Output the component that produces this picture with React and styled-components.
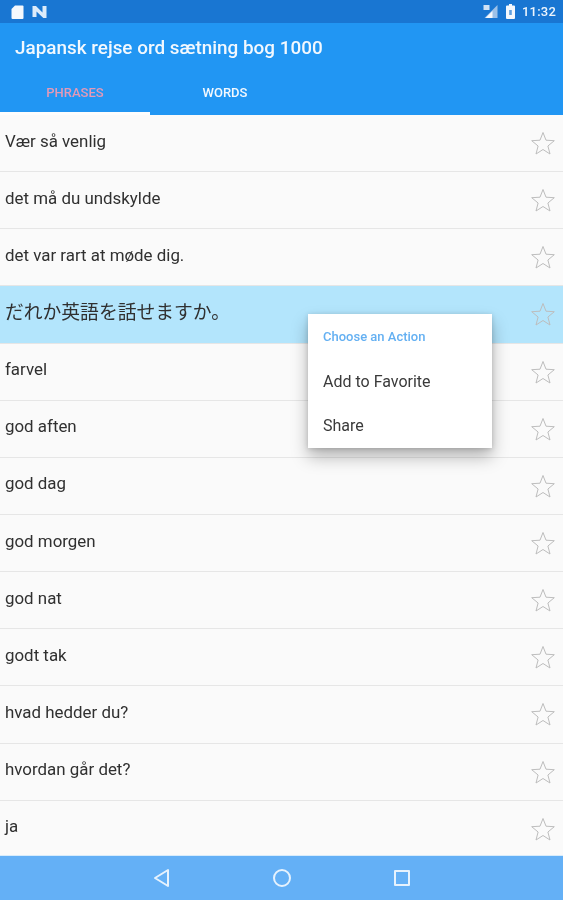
import React from "react";
import styled, { createGlobalStyle } from "styled-components";

const Global = createGlobalStyle`
  html, body { margin: 0; padding: 0; background: #fafafa; }
  #root { width: 563px; height: 900px; }
`;
const Page = styled.div`
  position: relative; width: 563px; height: 900px; overflow: hidden;
  display: flex; flex-direction: column; background: #fafafa;
  font-family: Roboto, "Noto Sans CJK JP", sans-serif; filter: blur(0.6px);
`;
const StatusBar = styled.div`
  height: 23px; flex: none; background: #1976d2; display: flex; align-items: center;
  padding: 0 7px 0 11px; color: #eef5fc;
`;
const StatusLeft = styled.div`display: flex; align-items: center; gap: 8px;`;
const StatusRight = styled.div`display: flex; align-items: center; margin-left: auto; gap: 7px;`;
const Clock = styled.span`font-size: 13px; font-weight: 500; letter-spacing: 0.2px;`;
const AppBar = styled.header`height: 92px; flex: none; background: #2196f3; display: flex; flex-direction: column;`;
const Title = styled.h1`
  margin: 0; padding: 14px 0 0 15px; height: 46px; box-sizing: border-box;
  font-size: 18.9px; line-height: 21px; font-weight: 500; color: #f2f8fe;
`;
const Tabs = styled.div`display: flex; height: 46px;`;
const Tab = styled.div`
  width: 150px; box-sizing: border-box; display: flex; align-items: center; justify-content: center;
  padding-top: 4px; font-size: 13px; font-weight: 500;
  color: ${p => (p.$active ? "#e39ab8" : "#f4f9fe")};
  border-bottom: 3px solid ${p => (p.$active ? "#fdfdfd" : "transparent")};
`;
const List = styled.main`flex: 1; min-height: 0; overflow: hidden;`;
const Row = styled.div`
  height: 57.15px; box-sizing: border-box; display: flex; align-items: center; justify-content: space-between;
  padding: 0 8px 0 5px; border-bottom: 1px solid #e6e6e6;
  background: ${p => (p.$selected ? "#b3e5fc" : "transparent")};
`;
const Label = styled.span`
  position: relative; top: ${p => (p.$large ? "-4px" : "-2.5px")}; color: #303030;
  font-size: ${p => (p.$large ? "18.8px" : "16.9px")};
`;
const Menu = styled.div`
  position: absolute; left: 308px; top: 314px; width: 184px; height: 134px; box-sizing: border-box;
  padding-left: 15px; background: #fff; color: #3a3a3a; font-size: 16px;
  box-shadow: 0 9px 16px rgba(0, 0, 0, 0.28), 0 1px 5px rgba(0, 0, 0, 0.16);
  display: flex; flex-direction: column;
`;
const MenuHeading = styled.div`height: 45px; box-sizing: border-box; display: flex; align-items: center; color: #64b0f2; font-size: 13px; font-weight: 500;`;
const MenuItem = styled.div`height: 45px; display: flex; align-items: center;`;
const NavBar = styled.nav`
  height: 45px; flex: none; background: #64b0f6; border-top: 1px solid #d8ecfb; box-sizing: border-box;
  display: grid; grid-template-columns: repeat(3, 120px); justify-content: center; justify-items: center; align-items: center;
`;

const Star = () => (
  <svg width="24" height="24" viewBox="0 0 24 24" fill="none" stroke="#bdbdbd" strokeWidth="1" strokeLinejoin="miter">
    <path d="M12 1.5l3 7.7 8.3.5-6.4 5.3 2.1 8-7-4.5-7 4.5 2.1-8L.7 9.7 9 9.2z" />
  </svg>
);
const SdIcon = () => (
  <svg width="13" height="14" viewBox="0 0 12 14" fill="#f4f8fd"><path d="M3.5 0.5H11a1 1 0 0 1 1 1V13a1 1 0 0 1-1 1H1a1 1 0 0 1-1-1V4z" /></svg>
);
const NIcon = () => (
  <svg width="15" height="12" viewBox="0 0 14 12" fill="#dcebfa"><path d="M0 0h3.5L10 6.5V0h4v12h-3.2L4 5.5V11H0z" /></svg>
);
const SignalIcon = () => (
  <svg width="17" height="15" viewBox="0 0 16 15">
    <path d="M15 1v13H2z" fill="#9dc1e8" /><path d="M10 7v7H3z" fill="#f4f8fd" />
    <path d="M1 1h6v5H1z" fill="#cfe1f5" />
  </svg>
);
const BatteryIcon = () => (
  <svg width="9" height="15" viewBox="0 0 9 15">
    <path d="M3 0h3v1.5h2a1 1 0 0 1 1 1V14a1 1 0 0 1-1 1H1a1 1 0 0 1-1-1V2.5a1 1 0 0 1 1-1h2z" fill="#f4f8fd" />
    <path d="M3.2 6h2.6v5H3.2z" fill="#5f9fdf" />
  </svg>
);
const Back = () => (
  <svg width="18" height="20" viewBox="0 0 18 20" fill="none" stroke="#e6f2fd" strokeWidth="2" strokeLinejoin="round"><path d="M15 2v16L2 10z" /></svg>
);
const Home = () => (
  <svg width="20" height="20" viewBox="0 0 20 20" fill="none" stroke="#e6f2fd" strokeWidth="2"><circle cx="10" cy="10" r="8" /></svg>
);
const Recent = () => (
  <svg width="18" height="18" viewBox="0 0 18 18" fill="none" stroke="#e6f2fd" strokeWidth="2" strokeLinejoin="round"><rect x="2" y="2" width="14" height="14" /></svg>
);

const rows = ["Vær så venlig", "det må du undskylde", "det var rart at møde dig.", "だれか英語を話せますか。", "farvel", "god aften", "god dag", "god morgen", "god nat", "godt tak", "hvad hedder du?", "hvordan går det?", "ja"];

export default function App() {
  return (
    <Page>
      <Global />
      <StatusBar>
        <StatusLeft><SdIcon /><NIcon /></StatusLeft>
        <StatusRight><SignalIcon /><BatteryIcon /><Clock>11:32</Clock></StatusRight>
      </StatusBar>
      <AppBar>
        <Title>Japansk rejse ord sætning bog 1000</Title>
        <Tabs><Tab $active>PHRASES</Tab><Tab>WORDS</Tab></Tabs>
      </AppBar>
      <List>
        {rows.map((r, i) => (
          <Row key={r} $selected={i === 3}><Label $large={i === 3}>{r}</Label><Star /></Row>
        ))}
      </List>
      <NavBar><Back /><Home /><Recent /></NavBar>
      <Menu>
        <MenuHeading>Choose an Action</MenuHeading>
        <MenuItem>Add to Favorite</MenuItem>
        <MenuItem>Share</MenuItem>
      </Menu>
    </Page>
  );
}
